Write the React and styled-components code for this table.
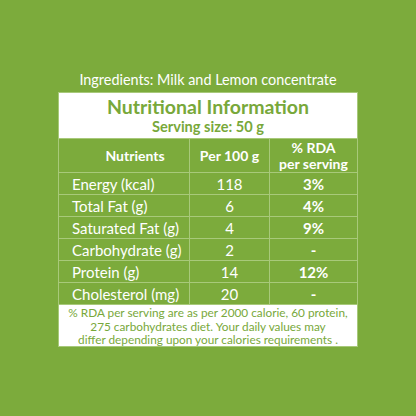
import React from 'react'
import styled, { createGlobalStyle } from 'styled-components'

const GlobalStyle = createGlobalStyle`
  body {
    margin: 0;
    background: #7cab3c;
    font-family: Lato, "Open Sans", sans-serif;
  }
`

const Page = styled.div`
  width: 416px;
  height: 416px;
  background: #7cab3c;
  display: flex;
  flex-direction: column;
  align-items: center;
  padding-top: 71px;
  box-sizing: border-box;
`

const Ingredients = styled.div`
  color: #fff;
  font-size: 14.4px;
  line-height: 18px;
  height: 21px;
  width: 300px;
  text-align: center;
`

const Panel = styled.div`
  width: 300px;
  border: 1px solid #a8c97a;
  box-sizing: border-box;
`

const TitleBox = styled.div`
  background: #fff;
  height: 45px;
  display: flex;
  flex-direction: column;
  align-items: center;
  justify-content: center;
  color: #78a83a;
`

const Title = styled.div`
  font-size: 19.5px;
  font-weight: 700;
  line-height: 22px;
`

const Serving = styled.div`
  font-size: 14.6px;
  font-weight: 700;
  line-height: 17px;
`

const Row = styled.div`
  display: grid;
  grid-template-columns: 130px 80px 1fr;
  height: ${p => (p.head ? 34 : 22)}px;
  border-top: 1px solid #a8c97a;
  box-sizing: border-box;
  color: #fff;
  font-size: ${p => (p.head ? 14 : 15)}px;
  line-height: 16px;
`

const Cell = styled.div`
  display: flex;
  align-items: center;
  justify-content: ${p => (p.left ? 'flex-start' : 'center')};
  padding-left: ${p => (p.left ? 13 : p.pad || 0)}px;
  border-left: ${p => (p.first ? 'none' : '1px solid #a8c97a')};
  font-weight: ${p => (p.bold ? 700 : 400)};
  text-align: center;
`

const Note = styled.div`
  background: #fff;
  border-top: 1px solid #a8c97a;
  color: #78a83a;
  font-size: 11.8px;
  line-height: 13.5px;
  text-align: center;
  padding: 1px 0 0;
  height: 42px;
  box-sizing: border-box;
  white-space: nowrap;
`

const rows = [
  ['Energy (kcal)', '118', '3%'],
  ['Total Fat (g)', '6', '4%'],
  ['Saturated Fat (g)', '4', '9%'],
  ['Carbohydrate (g)', '2', '-'],
  ['Protein (g)', '14', '12%'],
  ['Cholesterol (mg)', '20', '-'],
]

const App = () => {
  return (
    <Page>
      <GlobalStyle />
      <Ingredients>Ingredients: Milk and Lemon concentrate</Ingredients>
      <Panel>
        <TitleBox>
          <Title>Nutritional Information</Title>
          <Serving>Serving size: 50 g</Serving>
        </TitleBox>
        <Row head>
          <Cell first bold pad={22}>Nutrients</Cell>
          <Cell bold>Per 100 g</Cell>
          <Cell bold>% RDA<br />per serving</Cell>
        </Row>
        {rows.map(r => (
          <Row key={r[0]}>
            <Cell first left>{r[0]}</Cell>
            <Cell>{r[1]}</Cell>
            <Cell bold>{r[2]}</Cell>
          </Row>
        ))}
        <Note>
          % RDA per serving are as per 2000 calorie, 60 protein,<br />
          275 carbohydrates diet. Your daily values may<br />
          differ depending upon your calories requirements .
        </Note>
      </Panel>
    </Page>
  )
}

export default App
